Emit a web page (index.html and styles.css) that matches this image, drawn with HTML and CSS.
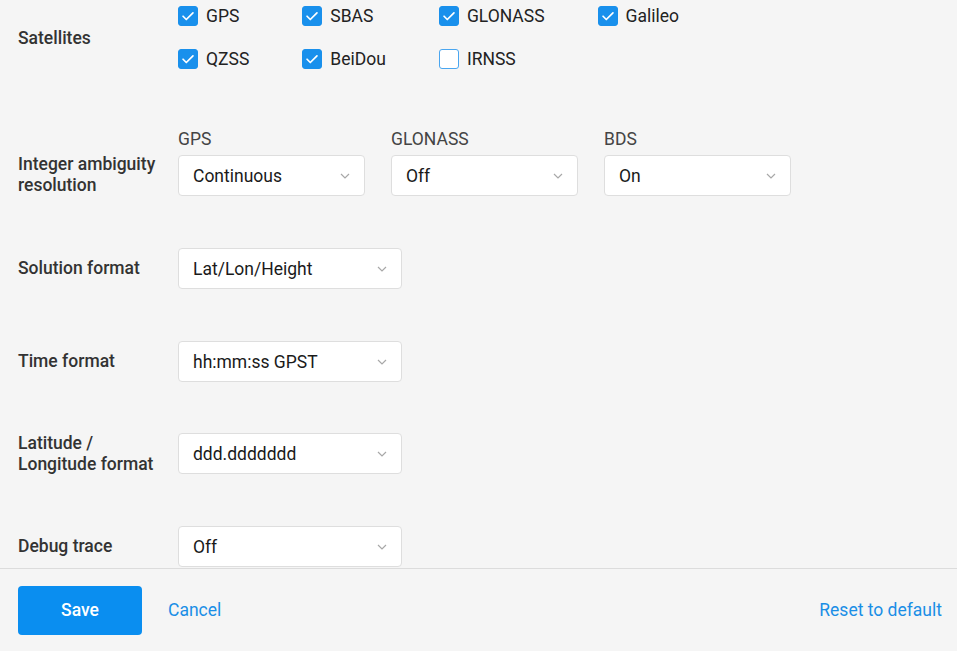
FILE: index.html
```html
<!DOCTYPE html>
<html>
<head>
<meta charset="utf-8">
<link rel="stylesheet" href="styles.css">
</head>
<body>
<div class="page">
  <main class="content">
    <section class="row row-sat">
      <div class="label">Satellites</div>
      <div class="checks">
        <label class="check"><span class="box on"><svg viewBox="0 0 20 20"><path d="M4.5 10.3l3.6 3.6L15.5 6.5"/></svg></span>GPS</label>
        <label class="check"><span class="box on"><svg viewBox="0 0 20 20"><path d="M4.5 10.3l3.6 3.6L15.5 6.5"/></svg></span>SBAS</label>
        <label class="check"><span class="box on"><svg viewBox="0 0 20 20"><path d="M4.5 10.3l3.6 3.6L15.5 6.5"/></svg></span>GLONASS</label>
        <label class="check"><span class="box on"><svg viewBox="0 0 20 20"><path d="M4.5 10.3l3.6 3.6L15.5 6.5"/></svg></span>Galileo</label>
        <label class="check"><span class="box on"><svg viewBox="0 0 20 20"><path d="M4.5 10.3l3.6 3.6L15.5 6.5"/></svg></span>QZSS</label>
        <label class="check"><span class="box on"><svg viewBox="0 0 20 20"><path d="M4.5 10.3l3.6 3.6L15.5 6.5"/></svg></span>BeiDou</label>
        <label class="check"><span class="box"></span>IRNSS</label>
      </div>
    </section>

    <section class="row row-amb">
      <div class="label">Integer ambiguity resolution</div>
      <div class="multi">
        <div class="field">
          <div class="sublabel">GPS</div>
          <div class="select small"><span>Continuous</span><svg class="chev" viewBox="0 0 10 6"><path d="M1 1l4 4 4-4"/></svg></div>
        </div>
        <div class="field">
          <div class="sublabel">GLONASS</div>
          <div class="select small"><span>Off</span><svg class="chev" viewBox="0 0 10 6"><path d="M1 1l4 4 4-4"/></svg></div>
        </div>
        <div class="field">
          <div class="sublabel">BDS</div>
          <div class="select small"><span>On</span><svg class="chev" viewBox="0 0 10 6"><path d="M1 1l4 4 4-4"/></svg></div>
        </div>
      </div>
    </section>

    <section class="row">
      <div class="label">Solution format</div>
      <div class="select"><span>Lat/Lon/Height</span><svg class="chev" viewBox="0 0 10 6"><path d="M1 1l4 4 4-4"/></svg></div>
    </section>

    <section class="row">
      <div class="label">Time format</div>
      <div class="select"><span>hh:mm:ss GPST</span><svg class="chev" viewBox="0 0 10 6"><path d="M1 1l4 4 4-4"/></svg></div>
    </section>

    <section class="row row-tight">
      <div class="label">Latitude / Longitude format</div>
      <div class="select"><span>ddd.ddddddd</span><svg class="chev" viewBox="0 0 10 6"><path d="M1 1l4 4 4-4"/></svg></div>
    </section>

    <section class="row">
      <div class="label">Debug trace</div>
      <div class="select"><span>Off</span><svg class="chev" viewBox="0 0 10 6"><path d="M1 1l4 4 4-4"/></svg></div>
    </section>
  </main>

  <footer class="footer">
    <button class="btn-save">Save</button>
    <a class="link">Cancel</a>
    <a class="link reset">Reset to default</a>
  </footer>
</div>
</body>
</html>
```

FILE: styles.css
```css
* { box-sizing: border-box; }
html, body {
  margin: 0;
  padding: 0;
  height: 100%;
  background: #f5f5f5;
  font-family: Roboto, "Liberation Sans", sans-serif;
  color: #222;
}
.page {
  height: 100vh;
  display: flex;
  flex-direction: column;
}
.content {
  flex: 1;
  overflow: hidden;
  padding: 0 18px;
  display: flex;
  flex-direction: column;
  gap: 52px;
}
.row {
  display: flex;
  align-items: center;
  height: 41px;
}
.row-tight {
  margin-top: -1px;
}
.row-sat {
  height: auto;
}
.row-sat .label {
  padding-top: 2px;
}
.row-amb {
  height: auto;
  align-items: flex-end;
}
.label {
  width: 160px;
  flex: none;
  font-size: 17.5px;
  font-weight: 500;
  line-height: 21px;
  color: #333;
  padding-right: 14px;
}
.checks {
  display: grid;
  grid-template-columns: repeat(4, auto);
  grid-auto-rows: 32px;
  row-gap: 11px;
  column-gap: 53px;
  justify-content: start;
}
.check {
  display: flex;
  align-items: center;
  gap: 8px;
  font-size: 17.5px;
  color: #222;
}
.box {
  width: 20px;
  height: 20px;
  border-radius: 3px;
  border: 1.5px solid #4aa6f0;
  background: #fff;
  display: flex;
  align-items: center;
  justify-content: center;
  flex: none;
}
.box.on {
  background: #1990ec;
  border-color: #1990ec;
}
.box svg {
  width: 20px;
  height: 20px;
  fill: none;
  stroke: #fff;
  stroke-width: 1.9;
  stroke-linecap: round;
  stroke-linejoin: round;
}
.multi {
  display: flex;
  gap: 26px;
}
.field {
  display: flex;
  flex-direction: column;
}
.sublabel {
  font-size: 17.5px;
  line-height: 22px;
  color: #444;
  margin-bottom: 6px;
  position: relative;
  top: 1px;
}
.select {
  width: 224px;
  height: 41px;
  background: #fff;
  border: 1px solid #dedede;
  border-radius: 4px;
  display: flex;
  align-items: center;
  justify-content: space-between;
  padding: 0 14px 0 14px;
  font-size: 17.5px;
  color: #1a1a1a;
}
.select.small {
  width: 187px;
}
.chev {
  width: 10px;
  height: 6px;
  fill: none;
  stroke: #a8a8a8;
  stroke-width: 1.2;
}
.footer {
  flex: none;
  height: 83px;
  border-top: 1px solid #dcdcdc;
  display: flex;
  align-items: center;
  padding: 0 15px 0 18px;
}
.btn-save {
  width: 124px;
  height: 49px;
  background: #0a8ef0;
  color: #fff;
  border: none;
  border-radius: 4px;
  font-family: inherit;
  font-size: 17.5px;
  font-weight: 500;
}
.link {
  color: #1a8ee6;
  font-size: 17.5px;
  margin-left: 26px;
}
.link.reset {
  margin-left: auto;
}
```
